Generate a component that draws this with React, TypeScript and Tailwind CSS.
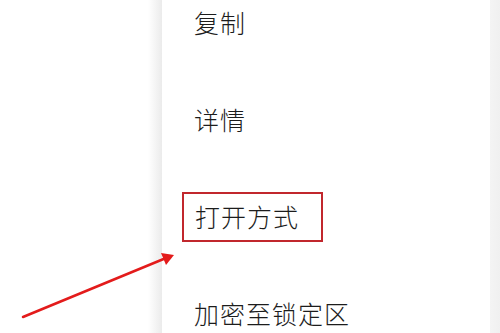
import React from "react";

const font = { fontFamily: '"Noto Sans CJK SC", "Noto Sans", sans-serif' };

export default function App() {
  const items = ["复制", "详情", "打开方式", "加密至锁定区"];
  return (
    <div
      className="relative flex w-[500px] h-[333px] overflow-hidden bg-white"
      style={font}
    >
      <div className="w-[162px] h-full bg-white flex justify-end">
        <div className="w-[14px] h-full bg-gradient-to-r from-white to-[#ebebeb]" />
      </div>
      <div className="w-[328px] h-full bg-white flex flex-col mt-[-26px] pl-[32px]">
        {items.map((t, i) => (
          <div key={i} className="h-[97px] shrink-0 flex items-center">
            {i === 2 ? (
              <div className="ml-[-12px] pl-[11px] w-[141px] h-[50px] border-2 border-[#c1272d] flex items-center">
                <span className="text-[25px] tracking-[1px] text-[#1c1c1c] font-light leading-none">
                  {t}
                </span>
              </div>
            ) : (
              <span className="text-[25px] tracking-[1px] text-[#1c1c1c] font-light leading-none">
                {t}
              </span>
            )}
          </div>
        ))}
      </div>
      <div className="w-[10px] h-full bg-gradient-to-r from-[#f4f4f4] to-[#f0f0f0]" />
      <svg
        className="absolute left-0 top-0 pointer-events-none"
        width="500"
        height="333"
        viewBox="0 0 500 333"
      >
        <line
          x1="23"
          y1="317"
          x2="166"
          y2="258"
          stroke="#e31b1b"
          strokeWidth="2.5"
          strokeLinecap="round"
        />
        <polygon points="174,255 161,253 166,265" fill="#e31b1b" />
      </svg>
    </div>
  );
}
